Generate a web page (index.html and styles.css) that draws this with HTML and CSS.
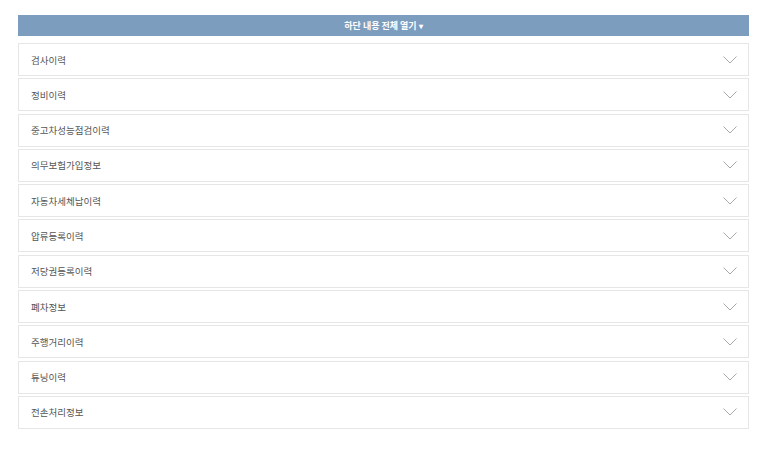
FILE: index.html
```html
<!DOCTYPE html>
<html>

<head>
    <title>이력 정보</title>
    <link rel="stylesheet" href="styles.css">
</head>

<body>
    <div class="wrap">
        <button type="button" class="open-all">하단 내용 전체 열기 <span class="caret">&#9662;</span></button>

        <div class="acc-list">
            <div class="acc-item"><span>검사이력</span><svg class="chev" viewBox="0 0 14 8"><path d="M0.5 0.5 L7 7 L13.5 0.5" /></svg></div>
            <div class="acc-item"><span>정비이력</span><svg class="chev" viewBox="0 0 14 8"><path d="M0.5 0.5 L7 7 L13.5 0.5" /></svg></div>
            <div class="acc-item"><span>중고차성능점검이력</span><svg class="chev" viewBox="0 0 14 8"><path d="M0.5 0.5 L7 7 L13.5 0.5" /></svg></div>
            <div class="acc-item"><span>의무보험가입정보</span><svg class="chev" viewBox="0 0 14 8"><path d="M0.5 0.5 L7 7 L13.5 0.5" /></svg></div>
            <div class="acc-item"><span>자동차세체납이력</span><svg class="chev" viewBox="0 0 14 8"><path d="M0.5 0.5 L7 7 L13.5 0.5" /></svg></div>
            <div class="acc-item"><span>압류등록이력</span><svg class="chev" viewBox="0 0 14 8"><path d="M0.5 0.5 L7 7 L13.5 0.5" /></svg></div>
            <div class="acc-item"><span>저당권등록이력</span><svg class="chev" viewBox="0 0 14 8"><path d="M0.5 0.5 L7 7 L13.5 0.5" /></svg></div>
            <div class="acc-item"><span>폐차정보</span><svg class="chev" viewBox="0 0 14 8"><path d="M0.5 0.5 L7 7 L13.5 0.5" /></svg></div>
            <div class="acc-item"><span>주행거리이력</span><svg class="chev" viewBox="0 0 14 8"><path d="M0.5 0.5 L7 7 L13.5 0.5" /></svg></div>
            <div class="acc-item"><span>튜닝이력</span><svg class="chev" viewBox="0 0 14 8"><path d="M0.5 0.5 L7 7 L13.5 0.5" /></svg></div>
            <div class="acc-item"><span>전손처리정보</span><svg class="chev" viewBox="0 0 14 8"><path d="M0.5 0.5 L7 7 L13.5 0.5" /></svg></div>
        </div>
    </div>
</body>

</html>
```

FILE: styles.css
```css
body {
    font-family: "Noto Sans CJK KR", "Noto Sans", sans-serif;
    margin: 0;
    padding: 0;
    background-color: #ffffff;
}

.wrap {
    width: 731px;
    margin: 0 0 0 18px;
    padding-top: 15px;
}

.open-all {
    display: block;
    width: 100%;
    height: 21px;
    margin: 0 0 7px 0;
    padding: 0;
    background-color: #7d9dbf;
    color: #ffffff;
    border: none;
    font-family: inherit;
    font-size: 9px;
    font-weight: bold;
    cursor: pointer;
}

.caret {
    font-size: 8px;
}

.acc-list {
    display: flex;
    flex-direction: column;
    gap: 2.3px;
}

.acc-item {
    display: flex;
    align-items: center;
    justify-content: space-between;
    height: 31px;
    padding: 0 11px 0 12px;
    border: 1px solid #e6e6e6;
    font-size: 9.5px;
    color: #555555;
    cursor: pointer;
}

.chev {
    width: 14px;
    height: 8px;
    fill: none;
    stroke: #a8a8a8;
    stroke-width: 1;
}
```
